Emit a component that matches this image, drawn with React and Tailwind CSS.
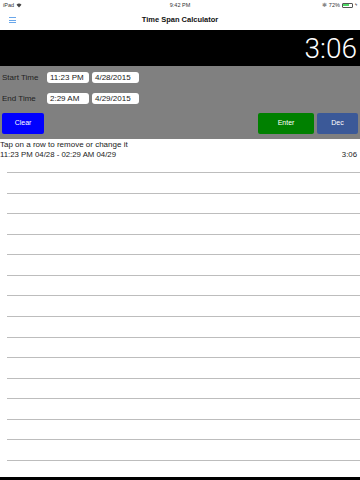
const rows = Array.from({ length: 15 })

const Field = ({ w, children }) => (
  <div className={`h-[11px] ${w} bg-white rounded-[3px] flex items-center pl-[3px] text-[8px] text-[#222]`}>
    {children}
  </div>
)

const App = () => {
  return (
    <div className="w-[360px] h-[480px] bg-white overflow-hidden flex flex-col" style={{ fontFamily: '"Liberation Sans", Arial, sans-serif' }}>
      {/* status bar */}
      <div className="h-[10px] shrink-0 flex items-center justify-between px-[3px] text-[5.5px] text-[#333] relative">
        <div className="flex items-center gap-[2px]">
          <span>iPad</span>
          <svg width="6" height="5" viewBox="0 0 12 10">
            <path d="M6 9 L1 3.5 A7 7 0 0 1 11 3.5 Z" fill="#444" />
          </svg>
        </div>
        <span className="absolute left-1/2 -translate-x-1/2">9:42 PM</span>
        <div className="flex items-center gap-[2px]">
          <span className="text-[#888]">✱</span>
          <span>72%</span>
          <div className="w-[11px] h-[5px] border border-[#555] rounded-[1px] p-[0.5px] flex">
            <div className="w-[70%] h-full bg-[#4cd964]" />
          </div>
          <span className="text-[4px]">ϟ</span>
        </div>
      </div>

      {/* nav bar */}
      <div className="h-[20px] shrink-0 flex items-center relative">
        <div className="ml-[9px] flex flex-col gap-[1.5px]">
          <div className="w-[7px] h-[1px] bg-[#6aa7ea]" />
          <div className="w-[7px] h-[1px] bg-[#6aa7ea]" />
          <div className="w-[7px] h-[1px] bg-[#6aa7ea]" />
        </div>
        <span className="absolute left-1/2 -translate-x-1/2 text-[7.5px] font-bold text-[#111]">Time Span Calculator</span>
      </div>

      {/* total display */}
      <div className="h-[36px] shrink-0 bg-black flex items-center justify-end pr-[3px]">
        <span className="text-[28px] font-light text-white leading-none mt-[2px]" style={{ fontFamily: 'Roboto, "Liberation Sans", sans-serif' }}>3:06</span>
      </div>

      {/* inputs */}
      <div className="h-[73px] shrink-0 bg-[#808080] flex flex-col px-[2px] pt-[6px]">
        <div className="flex items-center h-[11px]">
          <span className="w-[45px] text-[8px] text-[#222]">Start Time</span>
          <Field w="w-[42px]">11:23 PM</Field>
          <div className="w-[3px]" />
          <Field w="w-[47px]">4/28/2015</Field>
        </div>
        <div className="flex items-center h-[11px] mt-[10px]">
          <span className="w-[45px] text-[8px] text-[#222]">End Time</span>
          <Field w="w-[42px]">2:29 AM</Field>
          <div className="w-[3px]" />
          <Field w="w-[47px]">4/29/2015</Field>
        </div>
        <div className="flex items-center mt-[9px] h-[21px]">
          <div className="w-[42px] h-full bg-[#0000ff] rounded-[2px] flex items-center justify-center text-[7px] text-white">Clear</div>
          <div className="flex-1" />
          <div className="w-[56px] h-full bg-[#008000] rounded-[2px] flex items-center justify-center text-[7px] text-white">Enter</div>
          <div className="w-[3px]" />
          <div className="w-[41px] h-full bg-[#3b5998] rounded-[2px] flex items-center justify-center text-[7px] text-white">Dec</div>
        </div>
      </div>

      {/* list */}
      <div className="flex-1 min-h-0 flex flex-col text-[#222]">
        <div className="h-[9px] shrink-0 flex items-center mt-[1px] text-[8px]">Tap on a row to remove or change it</div>
        <div className="h-[10px] shrink-0 flex items-center justify-between pr-[3px] mt-[1px] text-[7.8px]">
          <span>11:23 PM 04/28 - 02:29 AM 04/29</span>
          <span>3:06</span>
        </div>
        <div className="mt-[12px] pl-[7px] shrink-0">
          {rows.map((_, i) => (
            <div key={i} className="h-[20.57px] border-t border-[#bdbdbd]" />
          ))}
        </div>
      </div>
      <div className="h-[3px] shrink-0 bg-black" />
    </div>
  )
}

export default App
